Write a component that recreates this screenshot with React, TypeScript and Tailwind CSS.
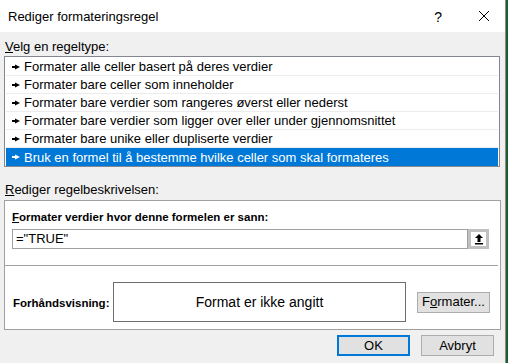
import React from "react";

const items = [
  "Formater alle celler basert på deres verdier",
  "Formater bare celler som inneholder",
  "Formater bare verdier som rangeres øverst eller nederst",
  "Formater bare verdier som ligger over eller under gjennomsnittet",
  "Formater bare unike eller dupliserte verdier",
  "Bruk en formel til å bestemme hvilke celler som skal formateres",
];

function RuleArrow({ color }: { color: string }) {
  return (
    <svg width="8" height="6" viewBox="0 0 8 6" className="shrink-0">
      <rect x="0" y="2" width="5" height="2" fill={color} />
      <polygon points="3,0.5 8,3 3,5.5" fill={color} />
    </svg>
  );
}

export default function App() {
  return (
    <div
      className="flex w-[508px] h-[363px] overflow-hidden text-[13px] text-black"
      style={{ fontFamily: '"Segoe UI", "Liberation Sans", Arial, sans-serif' }}
    >
      <div className="flex flex-col w-[506px] border-r border-[#8a8a8a] bg-[#f0f0f0]">
        {/* Title bar */}
        <div className="flex items-center h-[32px] bg-white shrink-0">
          <span className="pl-[8px] pt-[2px]">Rediger formateringsregel</span>
          <span className="ml-auto mr-[36px] text-[14px] pt-[2px]">?</span>
          <svg width="12" height="12" viewBox="0 0 12 12" className="mr-[15px]">
            <path d="M1 1 L11 11 M11 1 L1 11" stroke="#000" strokeWidth="1" />
          </svg>
        </div>

        <div className="flex flex-col px-[4px]">
          <div className="h-[24px] pt-[7px] pl-[1px] leading-[16px]">
            <span className="underline">V</span>elg en regeltype:
          </div>

          {/* Rule type list */}
          <div className="w-[496px] h-[111px] border border-[#828790] bg-white px-[1px] pt-[1px] flex flex-col">
            {items.map((t, i) => {
              const sel = i === items.length - 1;
              return (
                <div
                  key={t}
                  className={
                    sel
                      ? "flex items-center h-[18px] bg-[#0078d7] text-white pl-[6px] gap-[4px]"
                      : "flex items-center h-[18px] border-b border-[#ececec] pl-[6px] gap-[4px]"
                  }
                >
                  <RuleArrow color={sel ? "#fff" : "#000"} />
                  <span className="leading-[16px] pt-[1px]">{t}</span>
                </div>
              );
            })}
          </div>

          <div className="h-[33px] pt-[15px] pl-[1px] leading-[16px]">
            <span className="underline">R</span>ediger regelbeskrivelsen:
          </div>

          {/* Description box */}
          <div className="w-[497px] h-[130px] border border-[#a0a0a0] bg-white flex flex-col">
            <div className="h-[28px] pt-[8px] pl-[7px] font-bold text-[11.5px] leading-[16px]">
              <span className="underline">F</span>ormater verdier hvor denne formelen er sann:
            </div>
            <div className="flex ml-[7px] w-[477px] h-[20px]">
              <div className="flex-1 border border-[#a0a0a0] flex items-center pl-[3px] leading-[16px]">
                ="TRUE"
              </div>
              <div className="w-[21px] h-[20px] border-[3px] border-[#c0c0c0] bg-white flex items-center justify-center">
                <svg width="10" height="12" viewBox="0 0 10 12">
                  <path d="M5 1 L9 5 L6.5 5 L6.5 9 L3.5 9 L3.5 5 L1 5 Z" fill="#000" />
                  <rect x="1" y="10" width="8" height="1.5" fill="#000" />
                </svg>
              </div>
            </div>
            <div className="mt-[16px] mr-[2px] border-t border-[#a0a0a0]" />
            <div className="flex items-center pt-[16px]">
              <div className="w-[108px] pl-[8px] font-bold text-[11.5px] leading-[16px] mt-[2px]">Forhåndsvisning:</div>
              <div className="w-[293px] h-[40px] border border-[#6d6d6d] flex items-center justify-center text-[14px]">
                Format er ikke angitt
              </div>
              <button className="ml-[11px] w-[73px] h-[21px] border border-[#adadad] bg-[#e1e1e1] leading-[16px]">
                F<span className="underline">o</span>rmater...
              </button>
            </div>
          </div>

          {/* Bottom buttons */}
          <div className="flex justify-end gap-[11px] pt-[5px] pr-[7px]">
            <button className="w-[73px] h-[21px] border-2 border-[#0078d7] bg-[#e1e1e1] leading-[16px]">OK</button>
            <button className="w-[73px] h-[21px] border border-[#adadad] bg-[#e1e1e1] leading-[16px]">Avbryt</button>
          </div>
        </div>
      </div>
      <div className="w-[2px] bg-[#1e5c32]" />
    </div>
  );
}
